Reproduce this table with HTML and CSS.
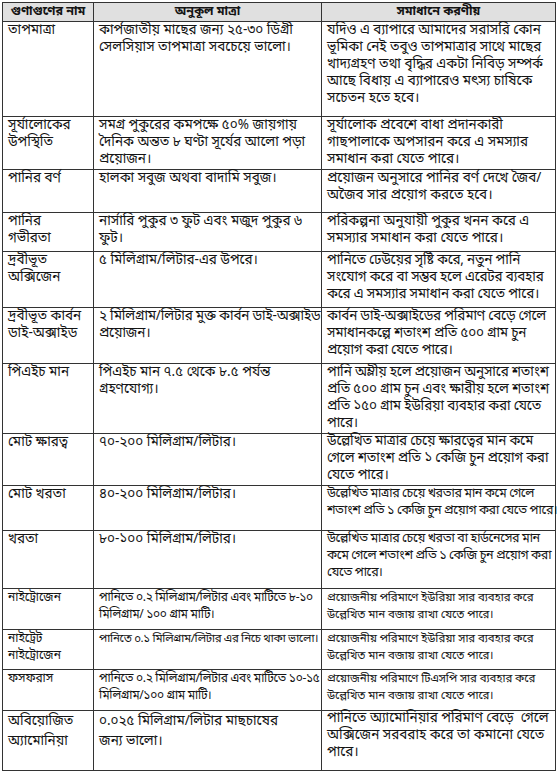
FILE: index.html
```html
<!DOCTYPE html>
<html lang="bn">
<head>
<meta charset="utf-8">
<title>গুণাগুণ</title>
<link rel="stylesheet" href="styles.css">
</head>
<body>
<table class="grid">
  <colgroup><col class="c1"><col class="c2"><col class="c3"></colgroup>
  <thead>
    <tr class="rh"><th><div class="l">গুণাগুণের নাম</div></th><th><div class="l">অনুকূল মাত্রা</div></th><th><div class="l">সমাধানে করণীয়</div></th></tr>
  </thead>
  <tbody>
    <tr class="r1">
      <td><div class="l">তাপমাত্রা</div></td>
      <td><div class="l">কার্পজাতীয় মাছের জন্য ২৫-৩০ ডিগ্রী</div><div class="l">সেলসিয়াস তাপমাত্রা সবচেয়ে ভালো।</div></td>
      <td><div class="l">যদিও এ ব্যাপারে আমাদের সরাসরি কোন</div><div class="l">ভূমিকা নেই তবুও তাপমাত্রার সাথে মাছের</div><div class="l">খাদ্যগ্রহণ তথা বৃদ্ধির একটা নিবিড় সম্পর্ক</div><div class="l">আছে বিধায় এ ব্যাপারেও মৎস্য চাষিকে</div><div class="l">সচেতন হতে হবে।</div></td>
    </tr>
    <tr class="r2">
      <td><div class="l">সূর্যালোকের</div><div class="l">উপস্থিতি</div></td>
      <td><div class="l">সমগ্র পুকুরের কমপক্ষে ৫০% জায়গায়</div><div class="l">দৈনিক অন্তত ৮ ঘণ্টা সূর্যের আলো পড়া</div><div class="l">প্রয়োজন।</div></td>
      <td><div class="l">সূর্যালোক প্রবেশে বাধা প্রদানকারী</div><div class="l">গাছপালাকে অপসারন করে এ সমস্যার</div><div class="l">সমাধান করা যেতে পারে।</div></td>
    </tr>
    <tr class="r3">
      <td><div class="l">পানির বর্ণ</div></td>
      <td><div class="l">হালকা সবুজ অথবা বাদামি সবুজ।</div></td>
      <td><div class="l">প্রয়োজন অনুসারে পানির বর্ণ দেখে জৈব/</div><div class="l">অজৈব সার প্রয়োগ করতে হবে।</div></td>
    </tr>
    <tr class="r4">
      <td><div class="l">পানির</div><div class="l">গভীরতা</div></td>
      <td><div class="l">নার্সারি পুকুর ৩ ফুট এবং মজুদ পুকুর ৬</div><div class="l">ফুট।</div></td>
      <td><div class="l">পরিকল্পনা অনুযায়ী পুকুর খনন করে এ</div><div class="l">সমস্যার সমাধান করা যেতে পারে।</div></td>
    </tr>
    <tr class="r5">
      <td><div class="l">দ্রবীভূত</div><div class="l">অক্সিজেন</div></td>
      <td><div class="l">৫ মিলিগ্রাম/লিটার-এর উপরে।</div></td>
      <td class="tight"><div class="l">পানিতে ঢেউয়ের সৃষ্টি করে, নতুন পানি</div><div class="l">সংযোগ করে বা সম্ভব হলে এরেটর ব্যবহার</div><div class="l">করে এ সমস্যার সমাধান করা যেতে পারে।</div></td>
    </tr>
    <tr class="r6">
      <td><div class="l">দ্রবীভূত কার্বন</div><div class="l">ডাই-অক্সাইড</div></td>
      <td class="tight"><div class="l">২ মিলিগ্রাম/লিটার মুক্ত কার্বন ডাই-অক্সাইড</div><div class="l">প্রয়োজন।</div></td>
      <td class="tight"><div class="l">কার্বন ডাই-অক্সাইডের পরিমাণ বেড়ে গেলে</div><div class="l">সমাধানকল্পে শতাংশ প্রতি ৫০০ গ্রাম চুন</div><div class="l">প্রয়োগ করা যেতে পারে।</div></td>
    </tr>
    <tr class="r7">
      <td><div class="l">পিএইচ মান</div></td>
      <td><div class="l">পিএইচ মান ৭.৫ থেকে ৮.৫ পর্যন্ত</div><div class="l">গ্রহণযোগ্য।</div></td>
      <td class="tight"><div class="l">পানি অম্লীয় হলে প্রয়োজন অনুসারে শতাংশ</div><div class="l">প্রতি ৫০০ গ্রাম চুন এবং ক্ষারীয় হলে শতাংশ</div><div class="l">প্রতি ১৫০ গ্রাম ইউরিয়া ব্যবহার করা যেতে</div><div class="l">পারে।</div></td>
    </tr>
    <tr class="r8">
      <td><div class="l">মোট ক্ষারত্ব</div></td>
      <td><div class="l">৭০-২০০ মিলিগ্রাম/লিটার।</div></td>
      <td class="up tight"><div class="l">উল্লেখিত মাত্রার চেয়ে ক্ষারত্বের মান কমে</div><div class="l">গেলে শতাংশ প্রতি ১ কেজি চুন প্রয়োগ করা</div><div class="l">যেতে পারে।</div></td>
    </tr>
    <tr class="r9">
      <td><div class="l">মোট খরতা</div></td>
      <td><div class="l">৪০-২০০ মিলিগ্রাম/লিটার।</div></td>
      <td class="up cond"><div class="l">উল্লেখিত মাত্রার চেয়ে খরতার মান কমে গেলে</div><div class="l">শতাংশ প্রতি ১ কেজি চুন প্রয়োগ করা যেতে পারে।</div></td>
    </tr>
    <tr class="r10">
      <td><div class="l">খরতা</div></td>
      <td><div class="l">৮০-১০০ মিলিগ্রাম/লিটার।</div></td>
      <td class="up cond"><div class="l">উল্লেখিত মাত্রার চেয়ে খরতা বা হার্ডনেসের মান</div><div class="l">কমে গেলে শতাংশ প্রতি ১ কেজি চুন প্রয়োগ করা</div><div class="l">যেতে পারে।</div></td>
    </tr>
    <tr class="r11 sm">
      <td><div class="l">নাইট্রোজেন</div></td>
      <td class="c2s"><div class="l">পানিতে ০.২ মিলিগ্রাম/লিটার এবং মাটিতে ৮-১০</div><div class="l">মিলিগ্রাম/ ১০০ গ্রাম মাটি।</div></td>
      <td class="c3s"><div class="l">প্রয়োজনীয় পরিমাণে ইউরিয়া সার ব্যবহার করে</div><div class="l">উল্লেখিত মান বজায় রাখা যেতে পারে।</div></td>
    </tr>
    <tr class="r12 sm">
      <td><div class="l">নাইট্রেট</div><div class="l">নাইট্রোজেন</div></td>
      <td class="c2s c2xs"><div class="l">পানিতে ০.১ মিলিগ্রাম/লিটার এর নিচে থাকা ভালো।</div></td>
      <td class="c3s"><div class="l">প্রয়োজনীয় পরিমাণে ইউরিয়া সার ব্যবহার করে</div><div class="l">উল্লেখিত মান বজায় রাখা যেতে পারে।</div></td>
    </tr>
    <tr class="r13 sm">
      <td><div class="l">ফসফরাস</div></td>
      <td class="c2s"><div class="l">পানিতে ০.২ মিলিগ্রাম/লিটার এবং মাটিতে ১০-১৫</div><div class="l">মিলিগ্রাম/১০০ গ্রাম মাটি।</div></td>
      <td class="c3s"><div class="l">প্রয়োজনীয় পরিমাণে টিএসপি সার ব্যবহার করে</div><div class="l">উল্লেখিত মান বজায় রাখা যেতে পারে।</div></td>
    </tr>
    <tr class="r14">
      <td><div class="l">অবিয়োজিত</div><div class="l">অ্যামোনিয়া</div></td>
      <td><div class="l">০.০২৫ মিলিগ্রাম/লিটার মাছচাষের</div><div class="l">জন্য ভালো।</div></td>
      <td class="up"><div class="l">পানিতে অ্যামোনিয়ার পরিমাণ বেড়ে &nbsp;গেলে</div><div class="l">অক্সিজেন সরবরাহ করে তা কমানো যেতে</div><div class="l">পারে।</div></td>
    </tr>
  </tbody>
</table>
</body>
</html>
```

FILE: styles.css
```css
html, body {
  margin: 0;
  padding: 0;
  background: #ffffff;
}
body {
  padding: 2px 0 0 2px;
  font-family: "Noto Sans Bengali", "Noto Serif Bengali", "Lohit Bengali", "FreeSerif", "Noto Sans", sans-serif;
  color: #141414;
}
.grid {
  border-collapse: collapse;
  table-layout: fixed;
  width: 553px;
  border: 1.5px solid #222;
}
.c1 { width: 91px; }
.c2 { width: 228px; }
.c3 { width: 234px; }

.grid tr {
  --lh: 17px;
  --pt: 1px;
  --pt-up: 0px;
}
.grid th, .grid td {
  border: 1px solid #333;
  vertical-align: top;
  padding: var(--pt) 2px 0 5px;
  font-size: 13.5px;
  text-align: left;
}
.grid .l {
  height: var(--lh);
  line-height: var(--lh);
  white-space: nowrap;
}
.grid td.up {
  padding-top: var(--pt-up);
}
.grid td.tight {
  letter-spacing: -0.2px;
}
.grid td.cond {
  font-size: 12.5px;
  letter-spacing: -0.4px;
}
.grid tr.sm td {
  font-size: 12px;
}
.grid tr.sm td.c2s {
  font-size: 12px;
  letter-spacing: -0.3px;
}
.grid tr.sm td.c2xs {
  font-size: 11.5px;
  letter-spacing: -0.35px;
}
.grid tr.sm td.c3s {
  font-size: 11.5px;
  letter-spacing: -0.1px;
}
.grid th {
  background: #e0e0e0;
  font-weight: bold;
  text-align: center;
  font-size: 12.5px;
  padding: 1px 2px 0;
}

.rh  { height: 19px; --lh: 17px; }
.r1  { height: 95px; --lh: 18.2px; --pt: 2px; }
.r2  { height: 53px; --lh: 16.5px; --pt: 1.5px; }
.r3  { height: 43px; --lh: 17px; --pt: 5px; }
.r4  { height: 39px; --lh: 17px; --pt: 1px; }
.r5  { height: 56px; --lh: 17.5px; --pt: 1px; }
.r6  { height: 56px; --lh: 17.5px; --pt: 1px; }
.r7  { height: 69px; --lh: 16.75px; --pt: 0px; }
.r8  { height: 52px; --lh: 17px; --pt: 5px; }
.r9  { height: 45px; --lh: 17px; --pt: 1px; }
.r10 { height: 58px; --lh: 18px; --pt: 2px; }
.r11 { height: 41px; --lh: 17px; --pt: 1px; }
.r12 { height: 40px; --lh: 17px; --pt: 0px; }
.r13 { height: 41px; --lh: 17px; --pt: 2px; }
.r14 { height: 60px; --lh: 19px; --pt: 3px; }
.r14 td:not(.up) .l { height: 20px; line-height: 20px; }
```
